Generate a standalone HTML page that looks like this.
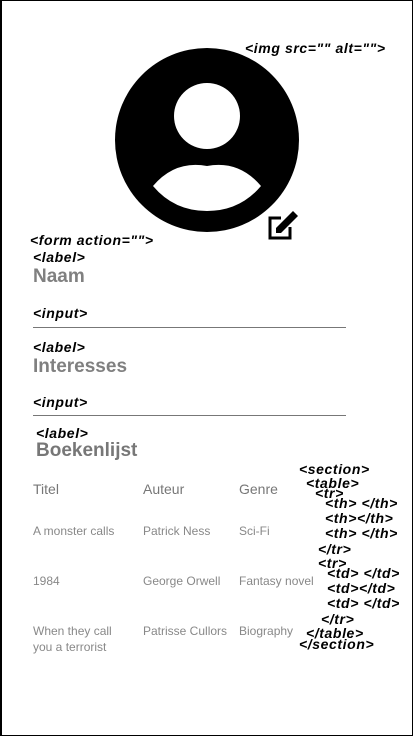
<!DOCTYPE html>
<html><head><meta charset="utf-8"><style>
*{margin:0;padding:0;box-sizing:border-box}
body{width:414px;height:736px;background:#fff;position:relative;overflow:hidden;font-family:"Liberation Sans",sans-serif}
.frame{position:absolute;left:0;top:0;width:413px;height:736px;border:1px solid #000;border-left-width:2px}
.t{position:absolute;font-style:italic;font-weight:bold;font-size:14px;letter-spacing:0.6px;color:#000;white-space:nowrap;line-height:1}
.g{position:absolute;color:#777;white-space:nowrap;line-height:1}
.line{position:absolute;left:33px;width:313px;height:1px;background:#777}
.c{position:absolute;color:#888;font-size:12px;white-space:nowrap;line-height:16px}
.h{position:absolute;color:#777;font-size:14px;white-space:nowrap;line-height:1}
</style></head><body>
<div class="frame"></div>
<svg style="position:absolute;left:0;top:0" width="414" height="260">
<circle cx="207" cy="140" r="92" fill="#000"/>
<circle cx="207" cy="116" r="33" fill="#fff"/>
<path d="M153 186 Q175 160 207 166 Q239 160 261 186 Q240 211 207 211 Q174 211 153 186Z" fill="#fff"/>
<path d="M281 218 H270 V238 H290 V227" fill="none" stroke="#000" stroke-width="3"/>
<path d="M276 233 L276 228 L293 211 L298 216 L281 233 Z" fill="#000"/>
</svg>
<div class="t" style="left:245px;top:41px">&lt;img src="" alt=""&gt;</div>
<div class="t" style="left:30px;top:233px">&lt;form action=""&gt;</div>
<div class="t" style="left:33px;top:250px">&lt;label&gt;</div>
<div class="g" style="left:33px;top:267px;font-size:19px;font-weight:bold;color:#808080">Naam</div>
<div class="t" style="left:33px;top:306px">&lt;input&gt;</div>
<div class="line" style="top:327px"></div>
<div class="t" style="left:33px;top:340px">&lt;label&gt;</div>
<div class="g" style="left:33px;top:357px;font-size:19px;font-weight:bold;color:#808080">Interesses</div>
<div class="t" style="left:33px;top:395px">&lt;input&gt;</div>
<div class="line" style="top:415px"></div>
<div class="t" style="left:36px;top:426px">&lt;label&gt;</div>
<div class="g" style="left:36px;top:441px;font-size:19px;font-weight:bold">Boekenlijst</div>
<div class="h" style="left:33px;top:482px">Titel</div>
<div class="h" style="left:143px;top:482px">Auteur</div>
<div class="h" style="left:239px;top:482px">Genre</div>
<div class="c" style="left:33px;top:523px">A monster calls</div>
<div class="c" style="left:143px;top:523px">Patrick Ness</div>
<div class="c" style="left:239px;top:523px">Sci-Fi</div>
<div class="c" style="left:33px;top:573px">1984</div>
<div class="c" style="left:143px;top:573px">George Orwell</div>
<div class="c" style="left:239px;top:573px">Fantasy novel</div>
<div class="c" style="left:33px;top:623px">When they call<br>you a terrorist</div>
<div class="c" style="left:143px;top:623px">Patrisse Cullors</div>
<div class="c" style="left:239px;top:623px">Biography</div>
<div class="t" style="left:299px;top:462px">&lt;section&gt;</div>
<div class="t" style="left:306px;top:476px">&lt;table&gt;</div>
<div class="t" style="left:315px;top:486px">&lt;tr&gt;</div>
<div class="t" style="left:325px;top:496px">&lt;th&gt; &lt;/th&gt;</div>
<div class="t" style="left:325px;top:511px">&lt;th&gt;&lt;/th&gt;</div>
<div class="t" style="left:325px;top:526px">&lt;th&gt; &lt;/th&gt;</div>
<div class="t" style="left:318px;top:542px">&lt;/tr&gt;</div>
<div class="t" style="left:318px;top:556px">&lt;tr&gt;</div>
<div class="t" style="left:327px;top:566px">&lt;td&gt; &lt;/td&gt;</div>
<div class="t" style="left:327px;top:581px">&lt;td&gt;&lt;/td&gt;</div>
<div class="t" style="left:327px;top:596px">&lt;td&gt; &lt;/td&gt;</div>
<div class="t" style="left:321px;top:612px">&lt;/tr&gt;</div>
<div class="t" style="left:306px;top:626px">&lt;/table&gt;</div>
<div class="t" style="left:299px;top:637px">&lt;/section&gt;</div>
</body></html>
